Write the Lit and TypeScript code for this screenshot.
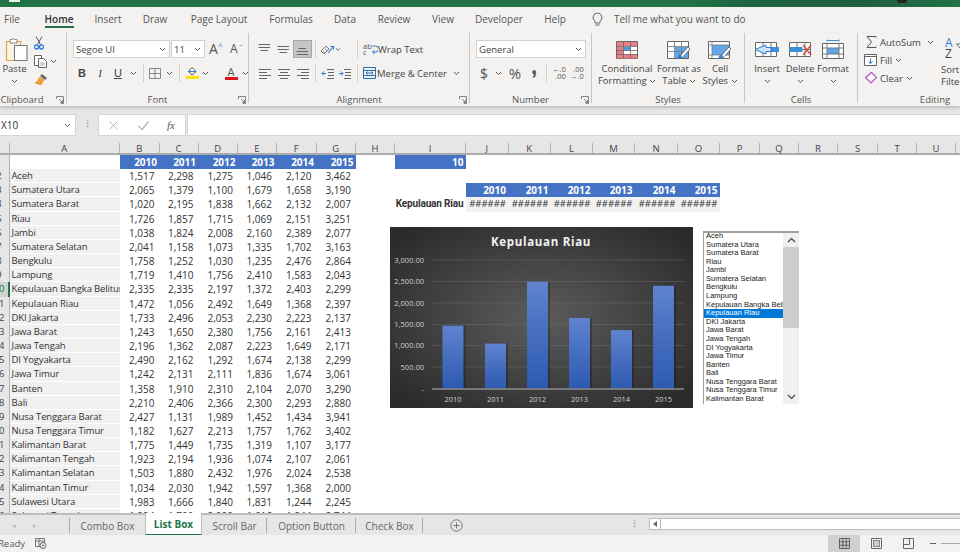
import { LitElement, html, css, svg } from "lit";
import { customElement } from "lit/decorators.js";

const ROWS: [string, string[]][] = [
  ["Aceh", ["1,517","2,298","1,275","1,046","2,120","3,462"]],
  ["Sumatera Utara", ["2,065","1,379","1,100","1,679","1,658","3,190"]],
  ["Sumatera Barat", ["1,020","2,195","1,838","1,662","2,132","2,007"]],
  ["Riau", ["1,726","1,857","1,715","1,069","2,151","3,251"]],
  ["Jambi", ["1,038","1,824","2,008","2,160","2,389","2,077"]],
  ["Sumatera Selatan", ["2,041","1,158","1,073","1,335","1,702","3,163"]],
  ["Bengkulu", ["1,758","1,252","1,030","1,235","2,476","2,864"]],
  ["Lampung", ["1,719","1,410","1,756","2,410","1,583","2,043"]],
  ["Kepulauan Bangka Belitung", ["2,335","2,335","2,197","1,372","2,403","2,299"]],
  ["Kepulauan Riau", ["1,472","1,056","2,492","1,649","1,368","2,397"]],
  ["DKI Jakarta", ["1,733","2,496","2,053","2,230","2,223","2,137"]],
  ["Jawa Barat", ["1,243","1,650","2,380","1,756","2,161","2,413"]],
  ["Jawa Tengah", ["2,196","1,362","2,087","2,223","1,649","2,171"]],
  ["DI Yogyakarta", ["2,490","2,162","1,292","1,674","2,138","2,299"]],
  ["Jawa Timur", ["1,242","2,131","2,111","1,836","1,674","3,061"]],
  ["Banten", ["1,358","1,910","2,310","2,104","2,070","3,290"]],
  ["Bali", ["2,210","2,406","2,366","2,300","2,293","2,880"]],
  ["Nusa Tenggara Barat", ["2,427","1,131","1,989","1,452","1,434","3,941"]],
  ["Nusa Tenggara Timur", ["1,182","1,627","2,213","1,757","1,762","3,402"]],
  ["Kalimantan Barat", ["1,775","1,449","1,735","1,319","1,107","3,177"]],
  ["Kalimantan Tengah", ["1,923","2,194","1,936","1,074","2,107","2,061"]],
  ["Kalimantan Selatan", ["1,503","1,880","2,432","1,976","2,024","2,538"]],
  ["Kalimantan Timur", ["1,034","2,030","1,942","1,597","1,368","2,000"]],
  ["Sulawesi Utara", ["1,983","1,666","1,840","1,831","1,244","2,245"]],
  ["Sulawesi Tengah", ["1,294","1,700","2,000","1,616","1,844","2,744"]],
];
const YEARS = ["2010","2011","2012","2013","2014","2015"];
const COLS = ["A","B","C","D","E","F","G","H","I","J","K","L","M","N","O","P","Q","R","S","T","U","V"];
const LIST = ROWS.slice(0, 20).map((r) => r[0]);
const BARS = [1472, 1056, 2492, 1649, 1368, 2397];
const BAR_X = [52.5, 95, 137, 179, 221, 263];
const Y_AXIS = [["3,000.00",33],["2,500.00",54.5],["2,000.00",76],["1,500.00",97.5],["1,000.00",118.5],["500.00",140],["-",162]] as [string,number][];

const chev = () => html`<svg class="chev" width="7" height="5" viewBox="0 0 7 5"><path d="M1 1l2.500 2.500L6 1" fill="none" stroke="#555" stroke-width="1"/></svg>`;
const launcher = () => html`<svg class="launch" width="8" height="8" viewBox="0 0 8 8"><path d="M.5 3V.5H7.500V7.500H5M3 3l3.500 3.500M6.500 4v2.500H4" fill="none" stroke="#777" stroke-width=".9"/></svg>`;
const ico = (w: number, h: number, body: unknown) => html`<svg width=${w} height=${h} viewBox="0 0 ${w} ${h}">${body}</svg>`;
const lines = (ys: number[], xs: [number, number][]) => ys.map((y, i) => svg`<path d="M${xs[i][0]} ${y}H${xs[i][1]}" stroke="#666" stroke-width="1"/>`);

const paste = ico(23, 24, svg`<path d="M1.500 4.500h14v19h-14z" fill="#fbf3e4" stroke="#e0a24a" stroke-width="1.200"/><path d="M5 4.500V2.500h2.500a1 1 0 0 1 2 0H12v3.500H5z" fill="#fff" stroke="#888"/><path d="M9.500 8.500h12.500v15H9.500z" fill="#fff" stroke="#777" stroke-width="1.100"/>`);
const scissors = ico(10, 14, svg`<path d="M2 .5l4.500 8M8 .5L3.500 8.500" stroke="#555" fill="none"/><circle cx="2.500" cy="11" r="2" fill="none" stroke="#2b7cd3" stroke-width="1.300"/><circle cx="7.500" cy="11" r="2" fill="none" stroke="#2b7cd3" stroke-width="1.300"/>`);
const copy = ico(13, 13, svg`<path d="M.5.500h7v10h-7z" fill="#fff" stroke="#666"/><path d="M4.500 3.500h5l3 3v6h-8z" fill="#fff" stroke="#666"/><path d="M6.500 8h4M6.500 10h4" stroke="#999"/>`);
const painter = ico(14, 13, svg`<path d="M8 1l5 4-2 2-5-4z" fill="#666"/><path d="M6 4l4 3-3 5-6-2 1-1 2 0-1-1 2-1-1-1z" fill="#f0a030" stroke="#d98a1e" stroke-width=".5"/>`);
const alignH = (a: number[][]) => ico(12, 11, svg`${a.map(([x1, x2, y]) => svg`<path d="M${x1} ${y}H${x2}" stroke="#666" stroke-width="1"/>`)}`);
const vTop = ico(13, 13, lines([1.500, 4.500, 7.500], [[0.500,12],[0.500,12],[2.500,10]]));
const vMid = ico(13, 13, lines([3.500, 6.500, 9.500], [[0.500,12],[0.500,12],[2.500,10]]));
const vBot = ico(13, 13, lines([5.500, 8.500, 11.500], [[2.500,10],[0.500,12],[0.500,12]]));
const aL = alignH([[0,12,1.500],[0,8,4.500],[0,12,7.500],[0,8,10.500]]);
const aC = alignH([[0,12,1.500],[2,10,4.500],[0,12,7.500],[2,10,10.500]]);
const aR = alignH([[0,12,1.500],[4,12,4.500],[0,12,7.500],[4,12,10.500]]);
const orient = ico(14, 13, svg`<path d="M1 8l5-5 3 3-5 5z" fill="none" stroke="#777"/><path d="M3 8l2 2M5 6l2 2" stroke="#888"/><path d="M8 10l5-6M10.500 3.500h3v3" fill="none" stroke="#2b7cd3" stroke-width="1.100"/>`);
const outdent = ico(13, 11, svg`<path d="M6 1.500h7M7 4.500h6M7 7.500h6M6 10.500h7" stroke="#666"/><path d="M5 5.500H1M3 3.500l-2 2 2 2" fill="none" stroke="#2b7cd3"/>`);
const indent = ico(13, 11, svg`<path d="M6 1.500h7M7 4.500h6M7 7.500h6M6 10.500h7" stroke="#666"/><path d="M1 5.500h4M3 3.500l2 2-2 2" fill="none" stroke="#2b7cd3"/>`);
const wrap = html`<span class="wrapi">ab<br>c</span>`;
const wrapArrow = ico(6, 11, svg`<path d="M0 2h3.500a2.500 2.500 0 0 1 0 6H1M2.500 6l-2 2 2 2" fill="none" stroke="#2b7cd3"/>`);
const merge = ico(13, 12, svg`<path d="M.500.500h12v11H.500z" fill="#e9f2fb" stroke="#2f6ea5"/><path d="M.500 3.500h12M.500 8.500h12" stroke="#2f6ea5"/><path d="M3 6h7M4.500 4.500L3 6l1.500 1.500M8.500 4.500L10 6 8.500 7.500" fill="none" stroke="#2b6cb0"/>`);
const borders = ico(12, 11, svg`<path d="M.500.500h11v10H.500zM6 .500v10M.500 5.500h11" fill="none" stroke="#888"/>`);
const bucket = html`<span class="color"><svg width="11" height="9" viewBox="0 0 11 9"><path d="M5 .500L9 4.500 5 8 1.500 4.500z" fill="#fff" stroke="#555"/><path d="M1.500 4.500h7" stroke="#2b7cd3"/></svg><i class="bar yellow"></i></span>`;
const fontA = html`<span class="color"><b class="fa">A</b><i class="bar red"></i></span>`;
const bulb = ico(11, 15, svg`<path d="M5.500 1a4.500 4.500 0 0 0-2.500 8.200V11h5V9.200A4.500 4.500 0 0 0 5.500 1zM3.500 13h4" fill="none" stroke="#666" stroke-width="1"/>`);
const grid = (body: unknown) => ico(24, 20, svg`<path d="M1.500 1.500h21v17h-21z" fill="#fff" stroke="#666"/>${body}<path d="M1.500 6.500h21M1.500 10.500h21M1.500 14.500h21M8.500 1.500v17M15.500 1.500v17" stroke="#666" fill="none" stroke-width=".8"/>`);
const brush = svg`<path d="M22 7l-8 9 2 2 8-9z" fill="#fff" stroke="#555" stroke-width=".8"/><path d="M10 19c2 0 5 0 6-3l-2-2c-2 1-2 4-4 5z" fill="#3a7fc4"/>`;
const cond = grid(svg`<rect x="2" y="2" width="20" height="4" fill="#ee7c84"/><rect x="2" y="14.500" width="20" height="4" fill="#ee7c84"/><rect x="2" y="6.500" width="6" height="8" fill="#ee7c84"/><rect x="8.500" y="7" width="7" height="3.500" fill="#4a9bde"/><rect x="8.500" y="10.500" width="7" height="3.500" fill="#fff"/>`);
const fmtT = ico(26, 20, svg`<path d="M1.500 1.500h21v17h-21z" fill="#fff" stroke="#666"/><rect x="9" y="7" width="13" height="11" fill="#62a6ea"/><path d="M1.500 6.500h21M1.500 11.500h21M8.500 1.500v17M15.500 1.500v17" stroke="#777" fill="none" stroke-width=".8"/>${brush}`);
const cellS = ico(26, 20, svg`<path d="M1.500 1.500h21v17h-21z" fill="#fff" stroke="#666"/><rect x="5" y="5" width="17" height="10" fill="#62a6ea"/><path d="M1.500 5h21M5 1.500v17M1.500 15h21" stroke="#777" fill="none" stroke-width=".8"/>${brush}`);
const insertI = ico(26, 20, svg`<path d="M1.500 2.500h21v14h-21z" fill="#fff" stroke="#666"/><path d="M1.500 9.500h21M9 2.500v14M17 2.500v14" stroke="#777" fill="none"/><rect x="9" y="7" width="16" height="5" fill="#3f8fd8"/><path d="M12 5L1 9.500l11 4.500v-2.500h5v-4h-5z" fill="#cfe4f6" stroke="#2b7cd3"/>`);
const deleteI = ico(24, 20, svg`<path d="M1.500 2.500h21v14h-21z" fill="#fff" stroke="#666"/><path d="M1.500 9.500h21M9 2.500v14M17 2.500v14" stroke="#777" fill="none"/><rect x="1.500" y="7" width="13" height="5" fill="#3f8fd8"/><path d="M15 5l8 10M23 5l-8 10" stroke="#e0413a" stroke-width="1.300"/>`);
const formatI = ico(24, 21, svg`<path d="M6 1.500h12M6 .500v2M18 .500v2" stroke="#3f8fd8"/><path d="M1.500 4.500h21v15h-21z" fill="#fff" stroke="#666"/><rect x="6" y="9" width="12" height="6" fill="#62a6ea"/><path d="M1.500 9h21M1.500 15h21M6 4.500v15M18 4.500v15" stroke="#777" fill="none"/>`);
const sigma = ico(11, 12, svg`<path d="M10 1.500V.500H1l4.500 5.500L1 11.500h9v-1" fill="none" stroke="#555"/>`);
const fill = ico(13, 12, svg`<path d="M.500.500h12v11H.500z" fill="#fff" stroke="#666"/><path d="M.500 2.500h12" stroke="#666"/><path d="M6.500 4.500v5M4.500 7.500l2 2 2-2" fill="none" stroke="#2b7cd3"/>`);
const eraser = ico(13, 12, svg`<path d="M7.500 .500l5 5-5.500 5.500-5.500-5.500z" fill="#fff" stroke="#b24fc4" stroke-width="1.200"/><path d="M1.500 5.500l5 5" stroke="#b24fc4"/>`);
const sortI = html`<span class="sorti"><span class="az"><em>A</em><br>Z</span><svg width="12" height="12" viewBox="0 0 12 12"><path d="M.5 2h11L7 7v5l-2-1V7z" fill="#fff" stroke="#666"/></svg></span>`;
const cancel = ico(9, 9, svg`<path d="M.500.500l8 8M8.500.500l-8 8" stroke="#b9b9b9" stroke-width="1"/>`);
const check = ico(11, 9, svg`<path d="M.500 5l3.500 3.500L10.500.500" fill="none" stroke="#b9b9b9" stroke-width="1.400"/>`);
const plus = ico(13, 13, svg`<circle cx="6.500" cy="6.500" r="5.700" fill="none" stroke="#777" stroke-width="1"/><path d="M3.500 6.500h6M6.500 3.500v6" stroke="#777" stroke-width="1"/>`);
const macro = ico(12, 11, svg`<path d="M.500.500h9v8h-9zM.500 3h9M4 .500v8" fill="none" stroke="#777"/><circle cx="8" cy="7.500" r="3" fill="#f3f2f1" stroke="#666"/><circle cx="8" cy="7.500" r="1" fill="#666"/>`);
const vNormal = ico(11, 11, svg`<path d="M.500.500h10v10H.500zM3.800.500v10M7.200.500v10M.500 3.800h10M.500 7.200h10" fill="none" stroke="#555" stroke-width=".9"/>`);
const vPage = ico(11, 11, svg`<path d="M.500.500h10v10H.500z" fill="none" stroke="#666"/><rect x="2.500" y="2.500" width="6" height="6" fill="#ccc" stroke="#888"/>`);
const vBreak = ico(11, 11, svg`<path d="M.500.500h10v10H.500zM.500 6.500h6V.500" fill="none" stroke="#666"/>`);

@customElement("app-root")
export class AppRoot extends LitElement {
  static styles = css`
    :host { display: block; width: 960px; height: 552px; overflow: hidden; font-family: "Open Sans", "Noto Sans", sans-serif; font-size: 9.5px; color: #444; background: #e6e6e6; --cols: 9.5px 110.5px 39.5px 39px 39.5px 39px 39.5px 39.5px 39px 71px 42.5px 42.5px 42px 42px 43px 42px 40px 39px 39px 40px 39px 39px; }
    * { box-sizing: border-box; }
    .app { width: 960px; height: 552px; display: flex; flex-direction: column; overflow: hidden; }
    .title { height: 7px; flex: none; display: flex; align-items: flex-start; background: linear-gradient(90deg, #217346 0, #217346 72%, #1d6440 78%, #1f5f3f 90%, #217346 100%); }
    .title i { display: block; height: 1.5px; width: 11px; margin-left: 9px; background: #e8f0ea; flex: none; }
    .title u { display: block; height: 3px; width: 10px; margin-left: 877px; border-radius: 0 0 5px 5px; background: #222; flex: none; }
    .tabs { height: 26px; flex: none; padding-bottom: 2px; background: #f3f2f1; display: grid; grid-template-columns: 24px 70px 28px 66px 62px 82px 26px 72px 26px 86px 26px 21px 16px 1fr; align-items: center; font-size: 10px; color: #555; }
    .tab { text-align: center; white-space: nowrap; display: flex; justify-content: center; }
    .tab.on { color: #333; font-weight: 600; position: relative; }
    .tab.on::after { content: ""; position: absolute; left: 21px; width: 29px; top: 14px; height: 2px; background: #217346; }
    .bulbc { display: flex; justify-content: center; }
    .tell { padding-left: 9px; white-space: nowrap; }

    .ribbon { height: 73px; flex: none; background: #f3f2f1; display: flex; box-shadow: 0 2px 3px rgba(0,0,0,.18); position: relative; z-index: 1; font-size: 9.5px; }
    .grp { position: relative; flex: none; height: 70px; display: flex; flex-direction: column; border-right: 1px solid #c8c6c4; }
    .g-clip { width: 67px; } .g-font { width: 182px; } .g-align { width: 221px; } .g-num { width: 122px; } .g-sty { width: 153px; } .g-cell { width: 113px; } .g-edit { width: 154px; border-right: 0; }
    .body { flex: 1; display: flex; min-height: 0; }
    .lbl { height: 9px; line-height: 12px; text-align: center; font-size: 9.5px; color: #555; flex: none; }
    .g-clip .lbl { width: 44px; }
    .launch { position: absolute; right: 2px; bottom: -1px; }
    .rows { display: flex; flex-direction: column; flex: 1; padding: 7px 0 0 6px; }
    .row { display: flex; align-items: center; height: 18px; }
    .row + .row { margin-top: 6px; }
    .c { display: flex; justify-content: center; align-items: center; flex: none; height: 18px; }
    .w6 { width: 6px; } .w7 { width: 7px; } .w8 { width: 8px; } .w9 { width: 9px; } .w10 { width: 10px; } .w12 { width: 12px; } .w16 { width: 16px; } .w18 { width: 18px; } .w19 { width: 19px; } .w20 { width: 20px; } .w22 { width: 22px; }
    .sel { background: #fff; border: 1px solid #d2d0ce; height: 18px; display: flex; align-items: center; justify-content: space-between; padding: 0 3px 0 2px; flex: none; font-size: 9.5px; color: #444; }
    .s-font { width: 97px; } .s-size { width: 34px; margin-left: 1px; } .s-num { width: 110px; }
    .grow { font-size: 14px; line-height: 1; color: #555; position: relative; flex: none; }
    .grow.lg { width: 16px; margin-left: 4px; }
    .grow.sm { font-size: 12px; width: 16px; margin-left: 5px; }
    .grow sup { position: absolute; font-size: 8px; line-height: 8px; top: 0; color: #2b7cd3; left: 9px; }
    .sep { width: 1px; height: 18px; background: #d2d0ce; }
    .bi { font-size: 11px; color: #444; font-weight: 700; font-family: "Liberation Sans", sans-serif; }
    .it { font-style: italic; font-weight: 400; font-family: "Liberation Serif", serif; }
    .un { text-decoration: underline; font-weight: 400; }
    .active { background: #c8c6c4; border: 1px solid #a8a6a4; }
    .color { display: flex; flex-direction: column; align-items: center; width: 13px; }
    .bar { display: block; width: 13px; height: 3px; }
    .yellow { background: #ffe600; } .red { background: #e0101c; }
    .fa { font-size: 11px; font-weight: 400; line-height: 10px; color: #555; }
    .txt { white-space: nowrap; color: #444; }
    .wrapi { font-size: 7.5px; line-height: 6px; color: #555; flex: none; }
    .wi { display: flex; align-items: center; width: 17px; padding-left: 2px; flex: none; }
    .dollar { font-size: 14px; color: #555; } .pct { font-size: 15px; color: #555; }
    .comma { font-family: "Liberation Sans", sans-serif; font-size: 24px; font-weight: 700; color: #555; line-height: 10px; padding-bottom: 14px; }
    .dec { font-size: 7.5px; line-height: 7px; color: #555; text-align: right; white-space: nowrap; }
    .dec b { color: #2b7cd3; font-weight: 400; }
    .big { display: flex; flex-direction: column; align-items: center; flex: none; padding-top: 6px; height: 56px; }
    .bigi { height: 21px; display: flex; align-items: center; }
    .bigt { margin-top: 3px; line-height: 12px; white-space: nowrap; text-align: center; }
    .b70 { width: 70px; } .b34 { width: 34px; } .b48 { width: 48px; } .b44 { width: 44px; } .b22 { width: 22px; }
    .clipbig { width: 29px; display: flex; flex-direction: column; align-items: center; padding-top: 4px; }
    .clipbig > svg:first-child { margin-left: 4px; flex: none; }
    .clipbig .bigt { margin-top: 2px; }
    .clipbig .chev { margin-top: 4px; }
    .clipc { display: flex; flex-direction: column; width: 34px; padding: 1px 0 0 5px; }
    .clipi { height: 18px; display: flex; align-items: center; gap: 3px; }
    .edcol { width: 78px; padding: 0 0 0 8px; display: flex; flex-direction: column; flex: none; }
    .edrow { height: 18px; display: flex; align-items: center; gap: 3px; }
    .edrow.nudge { margin-left: -2px; }
    .edrow .t { width: 44px; flex: none; }
    .sortc { width: 40px; padding: 3px 0 0 5px; flex: none; }
    .sorti { display: flex; align-items: center; height: 24px; padding-left: 4px; }
    .az { font-size: 12px; line-height: 11px; color: #444; width: 11px; } .az em { color: #2b7cd3; font-style: normal; }
    .sortc .t2 { line-height: 12px; margin-top: 4px; white-space: nowrap; }

    .fbar { height: 35px; flex: none; padding-top: 9px; background: #e6e6e6; display: flex; align-items: flex-start; }
    .namebox { width: 75px; height: 20px; background: #fff; box-shadow: 0 0 0 1px #d6d6d6; display: flex; align-items: center; justify-content: space-between; padding: 0 4px 0 1px; font-size: 10px; color: #333; flex: none; }
    .dots { width: 24px; text-align: center; color: #999; line-height: 18px; font-weight: 700; font-size: 9px; flex: none; }
    .fnbox { width: 86px; height: 20px; background: #fff; box-shadow: 0 0 0 1px #d6d6d6; display: flex; align-items: center; flex: none; padding-left: 10px; }
    .fnbox .gapi { width: 29px; display: flex; flex: none; }
    .fx { font-family: "Liberation Serif", serif; font-style: italic; color: #555; font-size: 11px; }
    .finput { flex: 1; margin-left: 3px; height: 20px; background: #fff; box-shadow: 0 0 0 1px #d6d6d6; }

    .headwrap { flex: none; background: #e6e6e6; padding-top: 2px; border-bottom: 2px solid #ababab; }
    .heads { height: 10px; display: grid; grid-template-columns: var(--cols); font-size: 9.5px; color: #444; line-height: 11px; }
    .hd { text-align: center; border-right: 1px solid #b4b4b4; height: 10px; }
    .corner { border-right: 1px solid #b4b4b4; }

    .sheet { position: relative; flex: none; height: 358px; background: #fff; overflow: hidden; }
    .srow { display: grid; grid-template-columns: var(--cols); height: 14.17px; font-size: 10px; line-height: 14px; color: #333; }
    .rh { background: #e6e6e6; border-right: 1px solid #b4b4b4; overflow: hidden; color: #444; font-size: 9.5px; }
    .rh span { display: block; width: 20px; margin-left: -11px; text-align: center; }
    .rh.cur { background: #d2d2d2; border-right: 2px solid #217346; color: #217346; }
    .a { background: #f0f0f0; padding-left: 2px; border-bottom: 1px solid #fff; white-space: nowrap; overflow: hidden; font-size: 9.5px; letter-spacing: -.14px; }
    .blank { background: #fff; }
    .n { text-align: right; padding-right: 5px; white-space: nowrap; }
    .hdr { background: #4472c4; color: #fff; font-weight: 700; text-align: right; padding-right: 2.5px; font-size: 10px; }
    .kr { font-family: Roboto, sans-serif; font-weight: 700; text-align: right; padding-right: 2.5px; white-space: nowrap; color: #333; font-size: 10px; letter-spacing: -.15px; }
    .ha { background: #f2f2f2; text-align: right; padding-right: 2.5px; font-size: 9.5px; white-space: nowrap; overflow: hidden; color: #333; }

    .chart { position: absolute; left: 390px; top: 72px; width: 303px; height: 181px; display: block; }
    .ct { font: 700 11.5px "Open Sans", sans-serif; letter-spacing: .7px; fill: #f2f2f2; }
    .cl { font: 400 7.5px "Open Sans", sans-serif; fill: #d0d0d0; }
    .list { position: absolute; left: 703px; top: 76px; width: 96px; height: 173px; background: #fff; border-top: 2px solid #a0a0a0; border-left: 1px solid #a0a0a0; display: flex; overflow: hidden; }
    .items { flex: 1; min-width: 0; overflow: hidden; font-family: "Liberation Sans", sans-serif; font-size: 7.5px; line-height: 8.58px; color: #222; margin-top: -1px; }
    .it2 { white-space: nowrap; overflow: hidden; padding-left: 2px; height: 8.58px; }
    .it2.cur { background: #0078d7; color: #fff; }
    .scroll { width: 16px; flex: none; background: #f0f0f0; display: flex; flex-direction: column; }
    .arr { height: 14px; display: flex; align-items: center; justify-content: center; flex: none; }
    .thumb { height: 81px; background: #cdcdcd; flex: none; }
    .track { flex: 1; }

    .sheets { height: 22px; flex: none; background: #e6e6e6; border-top: 2px solid #bdbdbd; display: flex; color: #666; font-size: 10px; position: relative; z-index: 3; }
    .stabs { display: grid; grid-template-columns: 70px 75px 57px 65px 89px 67px 67px; flex: none; }
    .st { display: flex; align-items: center; justify-content: center; white-space: nowrap; position: relative; }
    .st.sepd::after { content: ""; position: absolute; right: 0; top: 3px; bottom: 3px; width: 1px; background: #aaa; }
    .st.on { background: #fff; color: #217346; font-weight: 700; border-bottom: 2px solid #217346; margin-top: -2px; height: 23px; border-left: 1px solid #bbb; border-right: 1px solid #bbb; }
    .navarr { gap: 17px; color: #bbb; justify-content: flex-start; padding-left: 12px; font-size: 7px; }
    .tdots { width: 159px; flex: none; text-align: right; padding-right: 10px; color: #999; line-height: 17px; font-weight: 700; font-size: 9px; }
    .hscroll { flex: 1; margin-top: 3px; height: 12px; background: #fff; border: 1px solid #bbb; border-right: 0; display: flex; }
    .hl { width: 11px; border-right: 1px solid #bbb; display: flex; align-items: center; justify-content: center; flex: none; }
    .status { height: 17px; flex: none; background: #f3f2f1; display: flex; align-items: center; font-size: 9.5px; color: #555; position: relative; z-index: 3; }
    .ready { width: 37px; margin-left: -2px; flex: none; }
    .vbs { margin-left: auto; display: flex; align-items: center; height: 17px; }
    .vb { width: 32px; height: 17px; display: flex; align-items: center; justify-content: center; flex: none; }
    .vb.on { background: #d2d0ce; }
    .zm { width: 36px; display: flex; align-items: center; gap: 5px; padding-left: 6px; flex: none; height: 17px; overflow: hidden; }
    .zm i { display: block; width: 6px; height: 1.5px; background: #666; flex: none; }
    .zm u { display: block; width: 40px; height: 1px; background: #aaa; flex: none; }
  `;

  render() {
    return html`<div class="app">
      <div class="title"><i></i><u></u></div>
      <div class="tabs">
        <div class="tab">File</div><div class="tab on">Home</div><div class="tab">Insert</div><div class="tab">Draw</div><div class="tab">Page Layout</div><div class="tab">Formulas</div><div class="tab">Data</div><div class="tab">Review</div><div class="tab">View</div><div class="tab">Developer</div><div class="tab">Help</div><div></div>
        <div class="bulbc">${bulb}</div><div class="tell">Tell me what you want to do</div>
      </div>
      <div class="ribbon">
        <div class="grp g-clip">
          <div class="body">
            <div class="clipbig">${paste}<div class="bigt">Paste</div>${chev()}</div>
            <div class="clipc">
              <div class="clipi">${scissors}</div>
              <div class="clipi">${copy}${chev()}</div>
              <div class="clipi">${painter}</div>
            </div>
          </div>
          <div class="lbl">Clipboard</div>${launcher()}
        </div>
        <div class="grp g-font">
          <div class="body"><div class="rows">
            <div class="row"><div class="sel s-font">Segoe UI ${chev()}</div><div class="sel s-size">11 ${chev()}</div><div class="grow lg">A<sup>^</sup></div><div class="grow sm">A<sup>ˇ</sup></div></div>
            <div class="row">
              <div class="c w18 bi">B</div><div class="c w18 bi it">I</div><div class="c w18 bi un">U</div><div class="c w12">${chev()}</div><div class="c w8"><i class="sep"></i></div>
              <div class="c w16">${borders}</div><div class="c w12">${chev()}</div><div class="c w8"><i class="sep"></i></div>
              <div class="c w18">${bucket}</div><div class="c w9">${chev()}</div><div class="c w12"></div><div class="c w18">${fontA}</div><div class="c w10">${chev()}</div>
            </div>
          </div></div>
          <div class="lbl">Font</div>${launcher()}
        </div>
        <div class="grp g-align">
          <div class="body"><div class="rows">
            <div class="row">
              <div class="c w19">${vTop}</div><div class="c w19">${vMid}</div><div class="c w19 active">${vBot}</div><div class="c w7"><i class="sep"></i></div>
              <div class="c w16">${orient}</div><div class="c w6">${chev()}</div><div class="c w12"></div><div class="c w8"><i class="sep"></i></div>
              <div class="wi">${wrap}${wrapArrow}</div><div class="txt">Wrap Text</div>
            </div>
            <div class="row">
              <div class="c w19">${aL}</div><div class="c w19">${aC}</div><div class="c w19">${aR}</div><div class="c w7"><i class="sep"></i></div>
              <div class="c w16">${outdent}</div><div class="c w18">${indent}</div><div class="c w8"><i class="sep"></i></div>
              <div class="c w16">${merge}</div><div class="txt">Merge &amp; Center</div><div class="c w20">${chev()}</div>
            </div>
          </div></div>
          <div class="lbl">Alignment</div>${launcher()}
        </div>
        <div class="grp g-num">
          <div class="body"><div class="rows">
            <div class="row"><div class="sel s-num">General ${chev()}</div></div>
            <div class="row">
              <div class="c w16 dollar">$</div><div class="c w12">${chev()}</div><div class="c w22 pct">%</div><div class="c w16 comma">,</div><div class="c w8"><i class="sep"></i></div>
              <div class="c w18 dec"><span><b>←</b>.0<br>.00</span></div><div class="c w18 dec"><span>.00<br><b>→</b>.0</span></div>
            </div>
          </div></div>
          <div class="lbl">Number</div>${launcher()}
        </div>
        <div class="grp g-sty">
          <div class="body">
            <div class="big b70"><div class="bigi">${cond}</div><div class="bigt">Conditional<br>Formatting ${chev()}</div></div>
            <div class="big b34"><div class="bigi">${fmtT}</div><div class="bigt">Format as<br>Table ${chev()}</div></div>
            <div class="big b48"><div class="bigi">${cellS}</div><div class="bigt">Cell<br>Styles ${chev()}</div></div>
          </div>
          <div class="lbl">Styles</div>
        </div>
        <div class="grp g-cell">
          <div class="body">
            <div class="big b44"><div class="bigi">${insertI}</div><div class="bigt">Insert<br>${chev()}</div></div>
            <div class="big b22"><div class="bigi">${deleteI}</div><div class="bigt">Delete<br>${chev()}</div></div>
            <div class="big b44"><div class="bigi">${formatI}</div><div class="bigt">Format<br>${chev()}</div></div>
          </div>
          <div class="lbl">Cells</div>
        </div>
        <div class="grp g-edit">
          <div class="body">
            <div class="edcol">
              <div class="edrow">${sigma}<span class="t">AutoSum</span>${chev()}</div>
              <div class="edrow nudge">${fill}<span>Fill</span>${chev()}</div>
              <div class="edrow nudge">${eraser}<span>Clear</span>${chev()}</div>
            </div>
            <div class="sortc">${sortI}<div class="t2">Sort &amp;<br>Filter ${chev()}</div></div>
          </div>
          <div class="lbl">Editing</div>
        </div>
      </div>
      <div class="fbar">
        <div class="namebox">X10 ${chev()}</div>
        <div class="dots">⋮</div>
        <div class="fnbox"><span class="gapi">${cancel}</span><span class="gapi">${check}</span><span class="fx">fx</span></div>
        <div class="finput"></div>
      </div>
      <div class="headwrap">
        <div class="heads">
          <div class="corner"></div>
          ${COLS.map((c) => html`<div class="hd">${c}</div>`)}
        </div>
      </div>
      <div class="sheet">
        <div class="srow">
          <div class="rh"><span>1</span></div><div class="blank"></div>
          ${YEARS.map((y) => html`<div class="hdr">${y}</div>`)}
          <div></div><div class="hdr">10</div>
        </div>
        ${ROWS.map(([name, vals], i) => {
          const r = i + 2;
          return html`<div class="srow"><div class="rh ${r === 10 ? "cur" : ""}"><span>${r}</span></div><div class="a">${name}</div>${vals.map((v) => html`<div class="n">${v}</div>`)}${
            r === 3 ? html`<div></div><div></div>${YEARS.map((y) => html`<div class="hdr">${y}</div>`)}`
            : r === 4 ? html`<div></div><div class="kr">Kepulauan Riau</div>${YEARS.map(() => html`<div class="ha">######</div>`)}`
            : ""
          }</div>`;
        })}
        ${this.renderChart()}
        ${this.renderList()}
      </div>
      <div class="sheets">
        <div class="stabs">
          <div class="st sepd navarr"><span>◂</span><span>▸</span></div>
          <div class="st">Combo Box</div><div class="st on">List Box</div><div class="st sepd">Scroll Bar</div><div class="st sepd">Option Button</div><div class="st sepd">Check Box</div><div class="st">${plus}</div>
        </div>
        <div class="tdots">⋮</div>
        <div class="hscroll"><div class="hl"><svg width="5" height="6" viewBox="0 0 5 6"><path d="M4 0v6L0 3z" fill="#666"/></svg></div></div>
      </div>
      <div class="status">
        <div class="ready">Ready</div>${macro}
        <div class="vbs"><div class="vb on">${vNormal}</div><div class="vb">${vPage}</div><div class="vb">${vBreak}</div><div class="zm"><i></i><u></u></div></div>
      </div>
    </div>`;
  }

  renderChart() {
    return html`<svg class="chart" viewBox="0 0 303 181">
      <defs>
        <radialGradient id="bg" cx="50%" cy="50%" r="65%"><stop offset="0" stop-color="#5c5c5c"/><stop offset="1" stop-color="#2a2a2a"/></radialGradient>
        <linearGradient id="bar" x1="0" x2="0" y1="0" y2="1"><stop offset="0" stop-color="#5f83cf"/><stop offset="1" stop-color="#2c59b0"/></linearGradient>
      </defs>
      <rect width="303" height="181" fill="url(#bg)"/>
      <text class="ct" x="151" y="19" text-anchor="middle">Kepulauan Riau</text>
      ${Y_AXIS.map(([t, y], i) => svg`<text class="cl" x="34" y=${y + 2.5} text-anchor="end">${t}</text>${i < 6 ? svg`<path d="M42 ${y}H294" stroke="#6a6a6a" stroke-width=".5"/>` : ""}`)}
      ${BARS.map((v, i) => { const h = v * 0.04306; return svg`<rect x=${BAR_X[i] + 1} y=${162 - h} width="22" height=${h} fill="#000" opacity=".25"/><rect x=${BAR_X[i]} y=${162 - h} width="21" height=${h} fill="url(#bar)"/>`; })}
      <path d="M42 162H294" stroke="#8c8c8c" stroke-width="1.5"/>
      ${YEARS.map((y, i) => svg`<text class="cl" x=${BAR_X[i] + 10.5} y="175" text-anchor="middle">${y}</text>`)}
    </svg>`;
  }

  renderList() {
    return html`<div class="list">
      <div class="items">${LIST.map((n, i) => html`<div class="it2 ${i === 9 ? "cur" : ""}">${n}</div>`)}</div>
      <div class="scroll">
        <div class="arr"><svg width="9" height="6" viewBox="0 0 9 6"><path d="M1 5l3.500-3.500L8 5" fill="none" stroke="#444" stroke-width="1.200"/></svg></div>
        <div class="thumb"></div><div class="track"></div>
        <div class="arr"><svg width="9" height="6" viewBox="0 0 9 6"><path d="M1 1l3.500 3.500L8 1" fill="none" stroke="#444" stroke-width="1.200"/></svg></div>
      </div>
    </div>`;
  }
}
